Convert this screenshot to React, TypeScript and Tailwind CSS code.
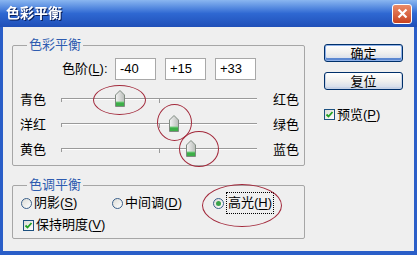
import React from "react";

const font = { fontFamily: '"Liberation Sans", "Noto Sans CJK SC", sans-serif' };

const sliders = [
  { left: "青色", right: "红色", value: -40 },
  { left: "洋红", right: "绿色", value: 15 },
  { left: "黄色", right: "蓝色", value: 33 },
];

const Key = ({ k }: { k: string }) => (
  <span>
    (<span className="underline underline-offset-2">{k}</span>)
  </span>
);

const Thumb = () => (
  <svg width="10" height="17" viewBox="0 0 10 17">
    <defs>
      <linearGradient id="tb" x1="0" y1="0" x2="1" y2="0">
        <stop offset="0" stopColor="#f4f4f4" />
        <stop offset="1" stopColor="#b9bdb9" />
      </linearGradient>
    </defs>
    <path d="M5 0.5 L9.5 5 L9.5 16.5 L0.5 16.5 L0.5 5 Z" fill="url(#tb)" stroke="#7f8a80" />
    <rect x="1" y="12" width="8" height="4" fill="#3dae48" />
    <line x1="1" y1="12" x2="9" y2="12" stroke="#7ccf84" />
  </svg>
);

const CheckBox = () => (
  <span className="w-[11px] h-[11px] border border-[#1c5180] bg-gradient-to-br from-[#dcdcd6] to-white flex items-center justify-center">
    <svg width="9" height="9" viewBox="0 0 9 9">
      <path d="M1.5 4.5 L3.5 6.5 L7.5 2" fill="none" stroke="#21a121" strokeWidth="1.8" />
    </svg>
  </span>
);

const Radio = ({ on }: { on?: boolean }) => (
  <span className="w-[11px] h-[11px] rounded-full border border-[#3a5f8a] bg-gradient-to-br from-[#dcdcd6] to-white flex items-center justify-center">
    {on && <span className="w-[5px] h-[5px] rounded-full bg-[#3aa34a]" />}
  </span>
);

const Button = ({ label, def }: { label: string; def?: boolean }) => (
  <button
    className={`w-[79px] h-[18px] rounded-[3px] border border-[#00306a] bg-gradient-to-b from-white via-[#f0f0ee] to-[#cfd9ea] text-[13px] leading-none text-black flex items-center justify-center ${
      def ? "shadow-[inset_0_0_0_1px_#8eb0e8,inset_0_-2px_0_1px_#5c88d0]" : "shadow-[inset_0_-1px_0_1px_#c8d3e6]"
    }`}
  >
    {label}
  </button>
);

export default function App() {
  return (
    <div
      className="relative w-[417px] h-[255px] flex flex-col bg-[#2a5ec8] text-[13px] text-black overflow-hidden"
      style={font}
    >
      <div className="h-[27px] flex items-center justify-between pl-[6px] pr-[5px] bg-gradient-to-b from-[#8ab6f0] via-[#2f68d2] to-[#1f4fb8]">
        <span className="text-white font-bold text-[14px] drop-shadow-[1px_1px_0_#0a1f5a]">色彩平衡</span>
        <span className="w-[20px] h-[20px] rounded-[3px] border border-white bg-gradient-to-b from-[#ea8a68] to-[#c8421e] flex items-center justify-center">
          <svg width="11" height="11" viewBox="0 0 11 11">
            <path d="M1.5 1.5 L9.5 9.5 M9.5 1.5 L1.5 9.5" stroke="white" strokeWidth="2.2" />
          </svg>
        </span>
      </div>

      <div className="flex-1 mx-[3px] mb-[4px] bg-[#efefef] flex">
        <div className="pl-[9px] pt-[11px]">
          <fieldset className="w-[293px] h-[128px] border border-[#a6a6a6] rounded-[2px]">
            <legend className="ml-[14px] px-[2px] text-[#2e5cb0] text-[13px] leading-[14px]">色彩平衡</legend>
            <div className="flex items-center mt-[6px] h-[22px]">
              <span className="ml-[49px] w-[53px] whitespace-nowrap">
                色阶<Key k="L" />:
              </span>
              <div className="flex gap-[9px]">
                {["-40", "+15", "+33"].map((v) => (
                  <span
                    key={v}
                    className="w-[41px] h-[22px] bg-white border border-[#a8a8a8] pl-[4px] flex items-center"
                  >
                    {v}
                  </span>
                ))}
              </div>
            </div>
            <div className="mt-[7px]">
              {sliders.map((s) => (
                <div key={s.left} className="flex items-center h-[25px] pl-[7px]">
                  <span className="w-[41px]">{s.left}</span>
                  <div className="relative w-[196px] h-[3px]">
                    <div className="h-[1px] bg-[#9a9a9a]" />
                    <div className="h-[1px] bg-white" />
                    <div className="absolute left-0 top-0 w-[1px] h-[4px] bg-[#9a9a9a]" />
                    <div className="absolute left-[98px] top-0 w-[1px] h-[5px] bg-[#9a9a9a]" />
                    <div
                      className="absolute -top-[8px] -ml-[5px]"
                      style={{ left: `${((s.value + 100) / 200) * 100}%` }}
                    >
                      <Thumb />
                    </div>
                  </div>
                  <span className="ml-[16px]">{s.right}</span>
                </div>
              ))}
            </div>
          </fieldset>

          <fieldset className="mt-[12px] w-[293px] h-[61px] border border-[#a6a6a6] rounded-[2px]">
            <legend className="ml-[14px] px-[2px] text-[#2e5cb0] text-[13px] leading-[14px]">色调平衡</legend>
            <div className="flex items-center h-[18px] mt-[2px] pl-[8px]">
              <label className="w-[91px] flex items-center gap-[2px]">
                <Radio />
                <span>
                  阴影<Key k="S" />
                </span>
              </label>
              <label className="w-[101px] flex items-center gap-[2px]">
                <Radio />
                <span>
                  中间调<Key k="D" />
                </span>
              </label>
              <label className="flex items-center gap-[3px]">
                <Radio on />
                <span className="outline outline-1 outline-dotted outline-black px-[1px]">
                  高光<Key k="H" />
                </span>
              </label>
            </div>
            <label className="flex items-center h-[18px] mt-[4px] pl-[10px] gap-[2px]">
              <CheckBox />
              <span>
                保持明度<Key k="V" />
              </span>
            </label>
          </fieldset>
        </div>

        <div className="ml-[19px] pt-[17px] flex flex-col">
          <Button label="确定" def />
          <div className="mt-[10px]">
            <Button label="复位" />
          </div>
          <label className="mt-[15px] flex items-center gap-[2px]">
            <CheckBox />
            <span>
              预览<Key k="P" />
            </span>
          </label>
        </div>
      </div>

      {/* red annotation ellipses */}
      <div className="absolute left-[93px] top-[85px] w-[53px] h-[30px] rounded-[50%] border border-[#a32a3c]" />
      <div className="absolute left-[157px] top-[104px] w-[35px] h-[37px] rounded-[50%] border border-[#a32a3c]" />
      <div className="absolute left-[179px] top-[131px] w-[40px] h-[36px] rounded-[50%] border border-[#a32a3c]" />
      <div className="absolute left-[202px] top-[184px] w-[80px] h-[43px] rounded-[50%] border border-[#a32a3c]" />
    </div>
  );
}
